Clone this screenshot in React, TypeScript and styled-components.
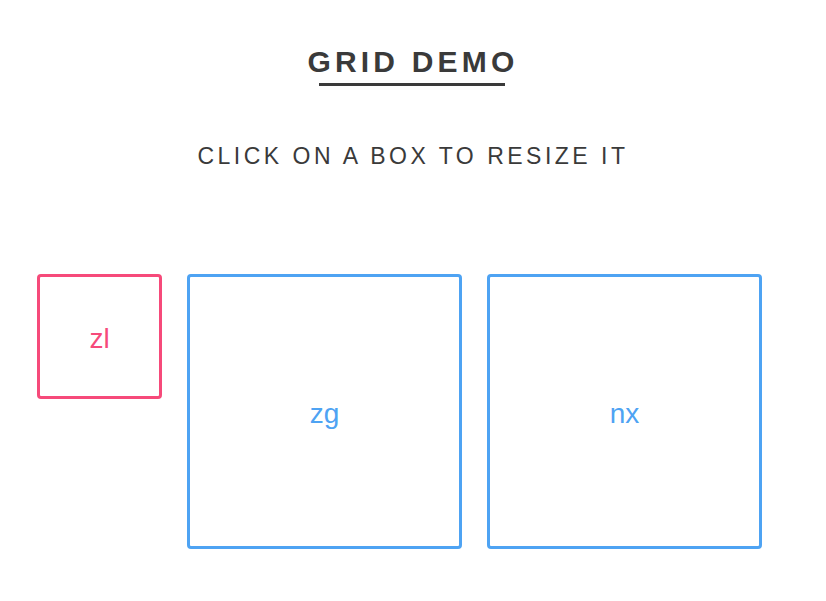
import React from "react";
import styled, { createGlobalStyle } from "styled-components";

const GlobalStyle = createGlobalStyle`
  html, body {
    margin: 0;
    padding: 0;
    background: #ffffff;
  }
  body {
    font-family: "Liberation Sans", Arial, sans-serif;
    color: #3a3a3a;
  }
`;

const Page = styled.main`
  width: 826px;
  padding-top: 44px;
`;

const Header = styled.header`
  display: flex;
  flex-direction: column;
  align-items: center;
`;

const Title = styled.h1`
  position: relative;
  margin: 0;
  font-size: 30px;
  font-weight: 700;
  letter-spacing: 4.2px;
  line-height: 36px;
  padding-bottom: 6px;

  &::after {
    content: "";
    position: absolute;
    left: 12px;
    right: 14px;
    bottom: 0;
    height: 3px;
    background: #3a3a3a;
  }
`;

const Subtitle = styled.p`
  margin: 56px 0 0;
  font-size: 23px;
  font-weight: 400;
  letter-spacing: 3.5px;
  line-height: 28px;
`;

const Grid = styled.section`
  display: grid;
  grid-template-columns: repeat(5, 125px);
  grid-auto-rows: 125px;
  gap: 25px;
  margin: 104px 0 0 37px;
`;

type Tone = "pink" | "blue";

const tones: Record<Tone, string> = {
  pink: "#f64a7a",
  blue: "#4ea3f3",
};

const Box = styled.button<{ $tone: Tone; $span: number }>`
  grid-column: span ${(p) => p.$span};
  grid-row: span ${(p) => p.$span};
  display: flex;
  align-items: center;
  justify-content: center;
  box-sizing: border-box;
  border: 3px solid ${(p) => tones[p.$tone]};
  border-radius: 4px;
  background: #ffffff;
  color: ${(p) => tones[p.$tone]};
  font-family: "Liberation Sans", Arial, sans-serif;
  font-size: 28px;
  padding: 5px 0 0;
  cursor: pointer;
`;

const boxes: { id: string; tone: Tone; span: number }[] = [
  { id: "zl", tone: "pink", span: 1 },
  { id: "zg", tone: "blue", span: 2 },
  { id: "nx", tone: "blue", span: 2 },
];

export default function App() {
  return (
    <>
      <GlobalStyle />
      <Page>
        <Header>
          <Title>GRID DEMO</Title>
          <Subtitle>CLICK ON A BOX TO RESIZE IT</Subtitle>
        </Header>
        <Grid>
          {boxes.map((b) => (
            <Box key={b.id} $tone={b.tone} $span={b.span}>
              {b.id}
            </Box>
          ))}
        </Grid>
      </Page>
    </>
  );
}
